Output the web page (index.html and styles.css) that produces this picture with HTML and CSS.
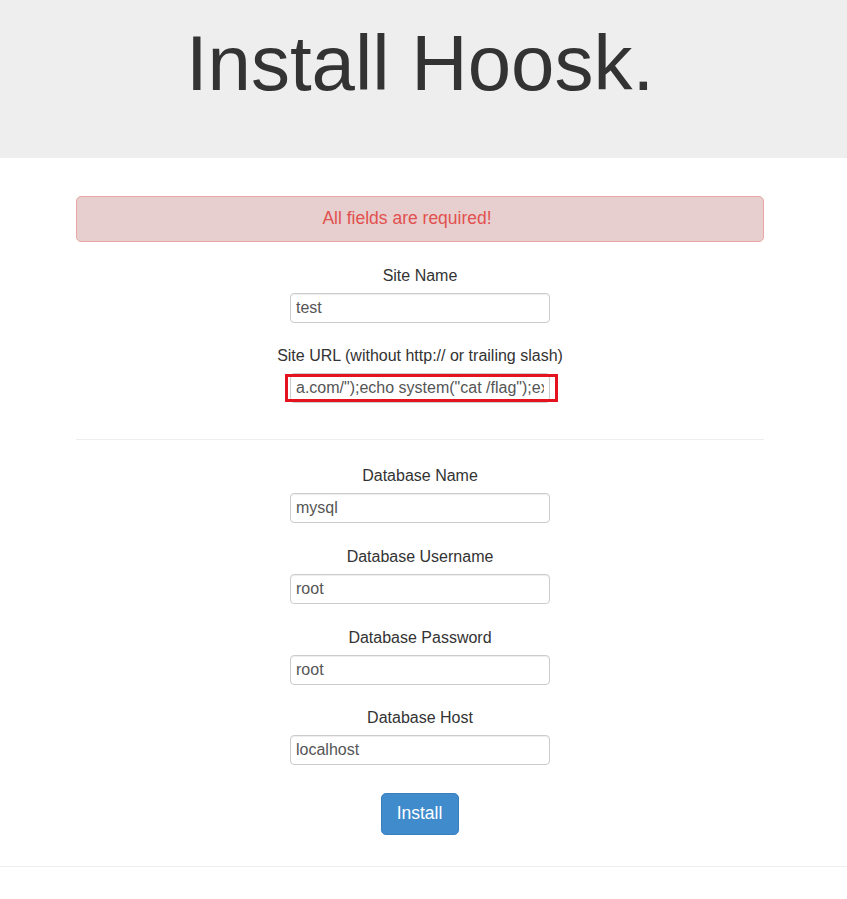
FILE: index.html
```html
<!DOCTYPE html>
<html lang="en">
<head>
<meta charset="utf-8">
<title>Install Hoosk</title>
<link rel="stylesheet" href="styles.css">
</head>
<body>
<header class="jumbotron">
  <h1 class="title">Install Hoosk.</h1>
</header>
<main class="content">
  <div class="alert">All fields are required!</div>
  <form class="form">
    <div class="group">
      <label class="label">Site Name</label>
      <div class="field"><input class="input" type="text" value="test"></div>
    </div>
    <div class="group">
      <label class="label">Site URL (without http:// or trailing slash)</label>
      <div class="field marked"><input class="input" type="text" value="a.com/&quot;);echo system(&quot;cat /flag&quot;);ex"></div>
    </div>
    <hr class="divider">
    <div class="group">
      <label class="label">Database Name</label>
      <div class="field"><input class="input" type="text" value="mysql"></div>
    </div>
    <div class="group">
      <label class="label">Database Username</label>
      <div class="field"><input class="input" type="text" value="root"></div>
    </div>
    <div class="group">
      <label class="label">Database Password</label>
      <div class="field"><input class="input" type="text" value="root"></div>
    </div>
    <div class="group">
      <label class="label">Database Host</label>
      <div class="field"><input class="input" type="text" value="localhost"></div>
    </div>
    <div class="actions">
      <button class="btn" type="button">Install</button>
    </div>
  </form>
</main>
<hr class="footer-rule">
</body>
</html>
```

FILE: styles.css
```css
html, body {
  margin: 0;
  padding: 0;
}
body {
  font-family: "Liberation Sans", Arial, sans-serif;
  font-size: 16px;
  line-height: 23px;
  color: #333;
  background: #fff;
}
.jumbotron {
  background: #eee;
  height: 158px;
  box-sizing: border-box;
  padding: 20px 7px 0 0;
  text-align: center;
}
.title {
  margin: 0;
  font-size: 78px;
  line-height: 86px;
  font-weight: 400;
  color: #333;
}
.content {
  margin: 38px 83px 0 76px;
}
.alert {
  height: 46px;
  box-sizing: border-box;
  border: 1px solid #eba6a4;
  background: #e6cfce;
  color: #e2514f;
  border-radius: 5px;
  text-align: center;
  font-size: 17.5px;
  line-height: 43px;
  padding-right: 26px;
}
.form {
  margin-top: 21.5px;
  display: flex;
  flex-direction: column;
  align-items: center;
}
.group {
  display: flex;
  flex-direction: column;
  align-items: center;
  margin-bottom: 21.67px;
}
.label {
  display: block;
  line-height: 23px;
  margin-bottom: 6px;
}
.field {
  position: relative;
  width: 260px;
}
.input {
  display: block;
  width: 260px;
  height: 30px;
  box-sizing: border-box;
  margin: 0;
  padding: 0 5px;
  border: 1px solid #ccc;
  border-radius: 4px;
  box-shadow: inset 0 1px 1px rgba(0,0,0,0.075);
  font-family: "Liberation Sans", Arial, sans-serif;
  font-size: 16px;
  color: #555;
  background: #fff;
  outline: none;
}
.marked::after {
  content: "";
  position: absolute;
  left: -5px;
  top: 1px;
  width: 273px;
  height: 28px;
  box-sizing: border-box;
  border: 3px solid #e3141f;
  pointer-events: none;
}
.divider {
  align-self: stretch;
  border: 0;
  border-top: 1px solid #eee;
  height: 0;
  margin: 14px 0 24.5px 0;
}
.actions {
  margin-top: 6px;
}
.btn {
  width: 78px;
  height: 42px;
  box-sizing: border-box;
  border: 1px solid #3a7fc0;
  border-radius: 5px;
  background: #3f8bcc;
  color: #fff;
  font-family: "Liberation Sans", Arial, sans-serif;
  font-size: 17.5px;
  padding: 0;
  margin-left: -1px;
}
.footer-rule {
  border: 0;
  border-top: 1px solid #eee;
  height: 0;
  margin: 31px 0 0 0;
}
```
